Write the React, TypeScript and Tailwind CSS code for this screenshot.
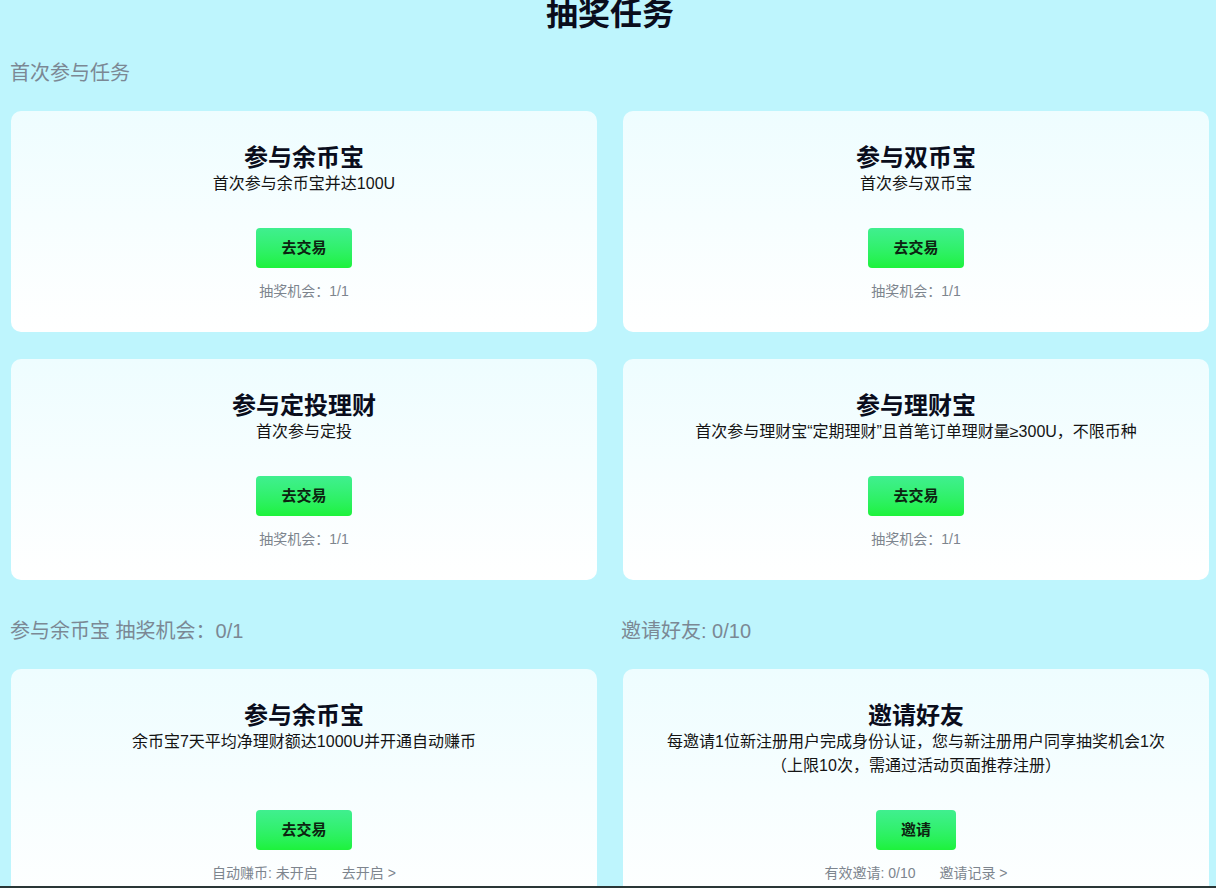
import React from "react";

type Task = {
  title: string;
  desc: string[];
  button: string;
  footer: string[];
  tall?: boolean;
};

const firstTasks: Task[] = [
  { title: "参与余币宝", desc: ["首次参与余币宝并达100U"], button: "去交易", footer: ["抽奖机会：1/1"] },
  { title: "参与双币宝", desc: ["首次参与双币宝"], button: "去交易", footer: ["抽奖机会：1/1"] },
  { title: "参与定投理财", desc: ["首次参与定投"], button: "去交易", footer: ["抽奖机会：1/1"] },
  {
    title: "参与理财宝",
    desc: ["首次参与理财宝“定期理财”且首笔订单理财量≥300U，不限币种"],
    button: "去交易",
    footer: ["抽奖机会：1/1"],
  },
];

function TaskCard({ task }: { task: Task }) {
  return (
    <div className="flex flex-col items-center rounded-[10px] bg-gradient-to-b from-[#eefdff] to-white pt-[33px] pb-[31px] text-center">
      <h2 className="text-[24px] leading-[28px] font-bold text-[#0a0d1c]">{task.title}</h2>
      <div className={`text-[16px] leading-[24px] text-[#141414] ${task.tall ? "min-h-[48px]" : ""}`}>
        {task.desc.map((d) => (
          <div key={d}>{d}</div>
        ))}
      </div>
      <button className="mt-[32px] h-[40px] rounded-[4px] bg-gradient-to-b from-[#40ef8f] to-[#1df23a] px-[25px] text-[15px] font-bold text-[#0c2410]">
        {task.button}
      </button>
      <div className="mt-[13px] flex gap-[24px] text-[14px] leading-[20px] text-[#7d858e]">
        {task.footer.map((f) => (
          <span key={f}>{f}</span>
        ))}
      </div>
    </div>
  );
}

export default function App() {
  return (
    <div
      className="min-h-screen bg-[#bef5fd] pl-[11px] pr-[7px] pb-10"
      style={{ fontFamily: '"Liberation Sans", "Noto Sans CJK SC", sans-serif' }}
    >
      <h1 className="-mt-[2px] text-center text-[32px] leading-[32px] font-bold text-[#0a0d1c]">抽奖任务</h1>

      <div className="mt-[29px] -ml-px text-[20px] leading-[28px] text-[#7b8894]">首次参与任务</div>
      <div className="mt-[24px] grid grid-cols-2 gap-x-[26px] gap-y-[27px]">
        {firstTasks.map((t) => (
          <TaskCard key={t.title} task={t} />
        ))}
      </div>

      <div className="mt-[37px] grid grid-cols-2 gap-x-[26px]">
        <div>
          <div className="-ml-px text-[20px] leading-[28px] text-[#7b8894]">参与余币宝 抽奖机会：0/1</div>
          <div className="mt-[24px]">
            <TaskCard
              task={{
                title: "参与余币宝",
                desc: ["余币宝7天平均净理财额达1000U并开通自动赚币"],
                button: "去交易",
                footer: ["自动赚币: 未开启", "去开启 >"],
                tall: true,
              }}
            />
          </div>
        </div>
        <div>
          <div className="-ml-[2px] text-[20px] leading-[28px] text-[#7b8894]">邀请好友: 0/10</div>
          <div className="mt-[24px]">
            <TaskCard
              task={{
                title: "邀请好友",
                desc: ["每邀请1位新注册用户完成身份认证，您与新注册用户同享抽奖机会1次", "（上限10次，需通过活动页面推荐注册）"],
                button: "邀请",
                footer: ["有效邀请: 0/10", "邀请记录 >"],
                tall: true,
              }}
            />
          </div>
        </div>
      </div>

      <div className="fixed bottom-0 left-0 right-0 h-[2px] bg-[#2a3636]" />
    </div>
  );
}
